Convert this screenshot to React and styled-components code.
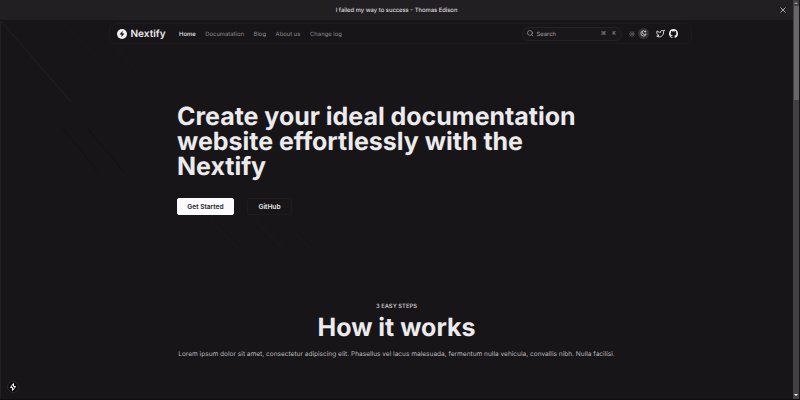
import React from 'react';
import styled, { createGlobalStyle } from 'styled-components';

const GlobalStyle = createGlobalStyle`
  * { box-sizing: border-box; }
  body {
    margin: 0;
    overflow: hidden;
    background: #171518;
    color: #eceaed;
    font-family: Inter, sans-serif;
    text-rendering: geometricPrecision;
    -webkit-font-smoothing: antialiased;
  }
  h1, h2, p { margin: 0; }
  svg { display: block; }
`;

const Shell = styled.div`
  position: relative;
  display: flex;
  width: 800px;
  height: 400px;
  overflow: hidden;
  border-bottom: 1px solid #0d0c0e;
`;

const Page = styled.div`
  position: relative;
  flex: 1;
  display: flex;
  flex-direction: column;
`;

const Beams = styled.svg`
  position: absolute;
  left: 0;
  top: 20px;
  pointer-events: none;
`;

const Banner = styled.div`
  position: relative;
  height: 20px;
  flex: none;
  display: flex;
  align-items: center;
  justify-content: center;
  padding-top: 1px;
  background: #221f23;
  font-size: 5.88px;
  line-height: 19px;
  color: #f0eef1;
`;

const CloseButton = styled.span`
  position: absolute;
  right: 7px;
  top: 7px;
  color: #b8b6b9;
`;

const Header = styled.header`
  position: relative;
  margin: 3px 101px 0 109px;
  height: 21px;
  flex: none;
  display: flex;
  align-items: center;
  padding: 0 13px 0 6.5px;
  border: 1px solid #1d1b1e;
  border-radius: 7px;
`;

const Brand = styled.div`
  display: flex;
  align-items: center;
  gap: 4px;
  width: 62.5px;
  font-size: 10px;
  font-weight: 600;
`;

const Nav = styled.nav`
  display: flex;
  gap: 9.6px;
  padding-top: 1px;
`;

const NavItem = styled.span`
  font-size: 5.9px;
  line-height: 9px;
  font-weight: ${(p) => (p.$active ? 500 : 400)};
  color: ${(p) => (p.$active ? '#e8e6e9' : '#8b898c')};
`;

const Tools = styled.div`
  margin-left: auto;
  display: flex;
  align-items: center;
`;

const SearchBox = styled.div`
  width: 100px;
  height: 14px;
  display: flex;
  align-items: center;
  gap: 3px;
  padding: 0 5px 0 4px;
  border: 1px solid #252326;
  border-radius: 7px;
  background: #19171a;
  color: #a3a1a4;
  font-size: 5.9px;
`;

const SearchLabel = styled.span`
  padding-top: 1px;
  line-height: 9px;
`;

const Keys = styled.span`
  margin-left: auto;
  display: flex;
  align-items: center;
  gap: 6px;
  font-size: 5.5px;
`;

const ThemeToggle = styled.div`
  margin-left: 4.5px;
  display: flex;
  align-items: center;
  gap: 0.5px;
`;

const ThemeOption = styled.span`
  width: 11px;
  height: 11px;
  display: flex;
  align-items: center;
  justify-content: center;
  border-radius: 50%;
  background: ${(p) => (p.$active ? '#343235' : 'transparent')};
  color: ${(p) => (p.$active ? '#d8d6d9' : '#858386')};
`;

const Social = styled.div`
  margin-left: 6.5px;
  display: flex;
  gap: 4.5px;
  color: #eceaed;
`;

const Hero = styled.section`
  position: relative;
  margin: 61px 0 0 177px;
  width: 420px;
`;

const HeroTitle = styled.h1`
  font-size: 25px;
  line-height: 25px;
  letter-spacing: -0.02px;
  font-weight: 700;
  white-space: nowrap;
`;

const Actions = styled.div`
  display: flex;
  gap: 13px;
  margin-top: 18px;
`;

const Button = styled.button`
  width: ${(p) => (p.$primary ? 57 : 45)}px;
  height: 17px;
  padding: 1px 0 0;
  border-radius: 2px;
  border: 1px solid ${(p) => (p.$primary ? '#fbfafc' : '#1d1b1e')};
  background: ${(p) => (p.$primary ? '#fbfafc' : 'transparent')};
  color: ${(p) => (p.$primary ? '#242127' : '#eceaed')};
  font: 600 6.6px/15px Inter, sans-serif;
`;

const Steps = styled.section`
  position: relative;
  margin-top: 87px;
  display: flex;
  flex-direction: column;
  align-items: center;
  white-space: nowrap;
`;

const Eyebrow = styled.p`
  font-size: 5.9px;
  line-height: 10px;
  font-weight: 500;
  color: #d5d3d6;
`;

const StepsTitle = styled.h2`
  margin-top: 4px;
  font-size: 25px;
  line-height: 25px;
  font-weight: 700;
`;

const Lead = styled.p`
  margin-top: 8px;
  font-size: 6.56px;
  line-height: 10px;
  color: #b9b7ba;
`;

const DevBadge = styled.div`
  position: absolute;
  left: 7px;
  top: 381px;
  width: 12px;
  height: 12px;
  display: flex;
  align-items: center;
  justify-content: center;
  border: 1px solid #2b292c;
  border-radius: 50%;
  background: #0f0e10;
  color: #ffffff;
`;

const Scrollbar = styled.div`
  width: 7px;
  flex: none;
  display: flex;
  flex-direction: column;
  align-items: center;
  justify-content: space-between;
  padding-bottom: 1px;
  background: #424043;
  border-right: 1px solid #171518;
`;

const ScrollTop = styled.div`
  display: flex;
  flex-direction: column;
  align-items: center;
`;

const ArrowSlot = styled.div`
  height: 6px;
  display: flex;
  align-items: center;
`;

const Thumb = styled.div`
  width: 5px;
  height: 94px;
  background: #686669;
`;

const Stroke = ({ size, width = 2, children }) => (
  <svg width={size} height={size} viewBox="0 0 24 24" fill="none" stroke="currentColor"
    strokeWidth={width} strokeLinecap="round" strokeLinejoin="round">{children}</svg>
);

export default function App() {
  return (
    <>
      <GlobalStyle />
      <Shell>
        <Page>
          <Beams width="793" height="379" fill="none" strokeWidth="1">
            <path d="M.5 379V1M1 1L71 82" stroke="#222023" />
            <path d="M65 5L137 80M106 15L140 56M210 200L240 230M255 200L285 230M292 210L314 232" stroke="#1b191c" />
            <path d="M88 109L124 152M62 107L98 152" stroke="#111012" />
          </Beams>
          <Banner>
            I failed my way to success - Thomas Edison
            <CloseButton><svg width="6" height="6" viewBox="0 0 6 6" stroke="currentColor" strokeWidth=".9"><path d="M.5.5l5 5M5.5.5l-5 5" /></svg></CloseButton>
          </Banner>
          <Header>
            <Brand>
              <svg width="10" height="10" viewBox="0 0 20 20">
                <circle cx="10" cy="10" r="10" fill="#f4f2f5" />
                <path d="M11.5 3.5L5 11h4.2L8.5 16.5 15 9h-4.2z" fill="#171518" />
              </svg>
              Nextify
            </Brand>
            <Nav>
              <NavItem $active>Home</NavItem>
              <NavItem>Documatation</NavItem>
              <NavItem>Blog</NavItem>
              <NavItem>About us</NavItem>
              <NavItem>Change log</NavItem>
            </Nav>
            <Tools>
              <SearchBox>
                <Stroke size={6.5} width={2.6}><circle cx="11" cy="11" r="9" /><path d="M22 22l-4.5-4.5" /></Stroke>
                <SearchLabel>Search</SearchLabel>
                <Keys><span>⌘</span><span>K</span></Keys>
              </SearchBox>
              <ThemeToggle>
                <ThemeOption>
                  <Stroke size={6} width={2.6}><circle cx="12" cy="12" r="4.5" /><path d="M12 1v2M12 21v2M1 12h2M21 12h2M4 4l2 2M18 18l2 2M4 20l2-2M18 6l2-2" /></Stroke>
                </ThemeOption>
                <ThemeOption $active>
                  <Stroke size={7} width={2.8}><path d="M10 3a7 7 0 0 0 11 10A9 9 0 1 1 10 3zM18 3v4M16 5h4" /></Stroke>
                </ThemeOption>
              </ThemeToggle>
              <Social>
                <Stroke size={9} width={2.5}><path d="M22 4s-.7 2.1-2 3.4c1.6 10-9.4 17.3-18 11.6 2.2.1 4.4-.6 6-2C3 15.5.5 9.6 3 5c2.2 2.6 5.6 4.1 9 4-.9-4.2 4-6.6 7-3.8 1.1 0 3-1.2 3-1.2z" /></Stroke>
                <svg width="9" height="9" viewBox="0 0 24 24" fill="currentColor"><path d="M12 .3a12 12 0 0 0-3.8 23.4c.6.1.8-.3.8-.6v-2c-3.3.7-4-1.6-4-1.6-.6-1.4-1.4-1.8-1.4-1.8-1-.7.1-.7.1-.7 1.2 0 1.9 1.2 1.9 1.2 1 1.8 2.8 1.3 3.5 1 0-.8.4-1.3.7-1.6-2.7-.3-5.5-1.3-5.5-6 0-1.2.5-2.3 1.3-3.1-.2-.4-.6-1.6 0-3.2 0 0 1-.3 3.4 1.2a11.5 11.5 0 0 1 6 0c2.3-1.5 3.3-1.2 3.3-1.2.6 1.6.2 2.8 0 3.2.9.8 1.3 1.9 1.3 3.2 0 4.6-2.8 5.6-5.5 5.9.5.4.9 1 .9 2.2v3.3c0 .3.1.7.8.6A12 12 0 0 0 12 .3" /></svg>
              </Social>
            </Tools>
          </Header>
          <Hero>
            <HeroTitle>Create your ideal documentation<br />website effortlessly with the<br />Nextify</HeroTitle>
            <Actions>
              <Button $primary>Get Started</Button>
              <Button>GitHub</Button>
            </Actions>
          </Hero>
          <Steps>
            <Eyebrow>3 EASY STEPS</Eyebrow>
            <StepsTitle>How it works</StepsTitle>
            <Lead>Lorem ipsum dolor sit amet, consectetur adipiscing elit. Phasellus vel lacus malesuada, fermentum nulla vehicula, convallis nibh. Nulla facilisi.</Lead>
          </Steps>
          <DevBadge>
            <svg width="6" height="8" viewBox="0 0 12 16" fill="none" stroke="currentColor" strokeWidth="2" strokeLinejoin="round"><path d="M7 1L1 9h4v6l6-8H7z" /></svg>
          </DevBadge>
        </Page>
        <Scrollbar>
          <ScrollTop>
            <ArrowSlot><svg width="4" height="2" viewBox="0 0 4 2"><path d="M0 2L2 0l2 2z" fill="#98969a" /></svg></ArrowSlot>
            <Thumb />
          </ScrollTop>
          <ArrowSlot><svg width="4" height="2" viewBox="0 0 4 2"><path d="M0 0l2 2 2-2z" fill="#ffffff" /></svg></ArrowSlot>
        </Scrollbar>
      </Shell>
    </>
  );
}
